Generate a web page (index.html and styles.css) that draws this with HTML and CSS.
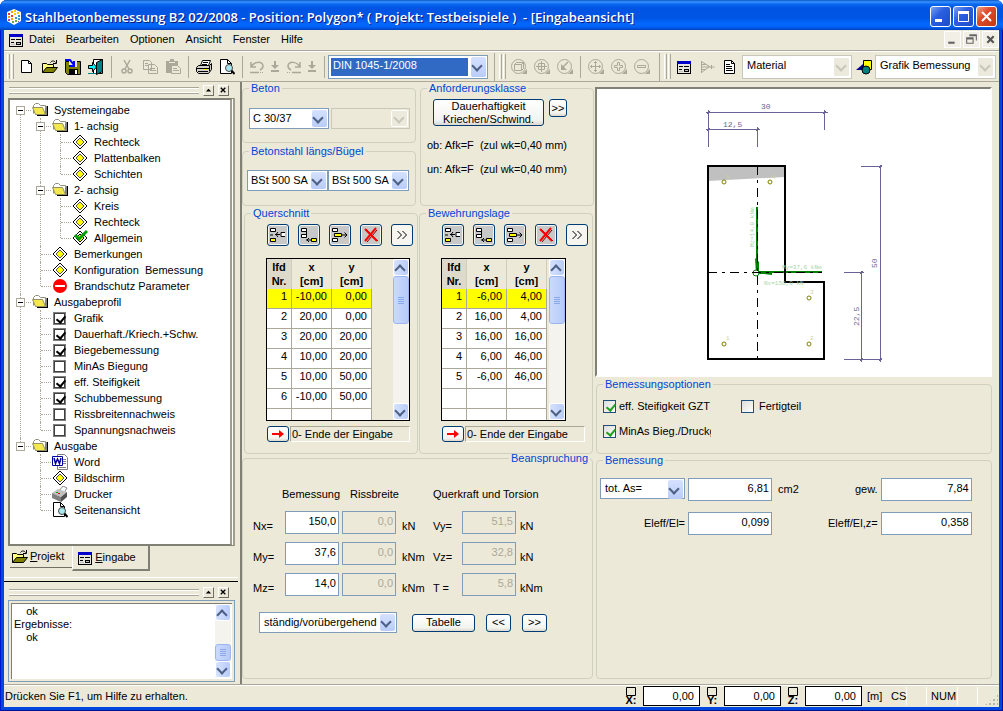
FILE: index.html
```html
<!DOCTYPE html>
<html lang="de">
<head>
  <meta charset="UTF-8">
  <meta name="viewport" content="width=device-width, initial-scale=1.0">
  <title>Stahlbetonbemessung B2</title>
  <link rel="stylesheet" href="styles.css">
</head>
<body>

  <!-- icon set -->
  <svg class="defs" width="0" height="0" aria-hidden="true">
    <symbol id="i-logo" viewBox="0 0 16 16">
      <path fill="#fff" d="M8 0l7 3v9l-7 4-7-4V3z"/>
      <path fill="#e33" d="M2 4h2v2H2zM5 6h2v2H5z"/><path fill="#f90" d="M5 2h2v2H5zM2 7h2v2H2zM5 9h2v2H5z"/>
      <path fill="#fc0" d="M8 1h2v2H8zM8 4h2v2H8zM11 3h2v2h-2z"/><path fill="#39c" d="M9 8h2v2H9zM12 6h2v2h-2zM12 9h2v2h-2z"/>
      <path fill="#6a4" d="M9 11h2v2H9zM6 12h2v2H6z"/><path fill="#a4a" d="M2 10h2v2H2zM12 12h1v1h-1z"/>
    </symbol>
    <symbol id="i-form" viewBox="0 0 16 16">
      <path fill="#000" d="M1 2h14v13H1z"/><path fill="#e8e6da" d="M2 5h12v9H2z"/><path fill="#0000c8" d="M1 2h14v3H1z"/>
      <path fill="#000" d="M3 7h4v1H3zM3 10h3v1H3zM8 7h5v1H8zM8 10h5v3H8z"/><path fill="#c0c0c0" d="M9 11h3v1H9zM3 12h4v1H3z"/>
    </symbol>
    <symbol id="i-new" viewBox="0 0 16 16">
      <path fill="#fff" stroke="#000" d="M2.500 1.500h7l3 3v9h-10z"/><path fill="none" stroke="#000" d="M9.500 1.500v3h3"/>
    </symbol>
    <symbol id="i-doc" viewBox="0 0 16 16">
      <path fill="#fff" stroke="#000" d="M2.500 1.500h7l3 3v10h-10z"/><path fill="none" stroke="#000" d="M9.500 1.500v3h3M4 5.500h4M4 7.500h6M4 9.500h6M4 11.500h7"/>
    </symbol>
    <symbol id="i-open" viewBox="0 0 16 16">
      <path fill="#ffff80" stroke="#000" d="M.5 13.500v-9h4l1 1h6v3"/><path fill="#808000" stroke="#000" d="M.5 13.500l4-5h11l-4 5z"/>
      <path fill="none" stroke="#000" d="M8.500 3.500c1-2 4-2 5 0M14.500 1v3.500H11"/>
    </symbol>
    <symbol id="i-save" viewBox="0 0 16 16">
      <path fill="#808000" stroke="#000" d="M.5 2.500h15v13h-13l-2-2z"/><path fill="#000" d="M4 10h9v6H4z"/><path fill="#fff" d="M10 11h2v4h-2z"/>
      <path fill="#e8e8e8" d="M4 2h8v6H4z"/><path fill="none" stroke="#00f" stroke-width="2" d="M0 1h5l4 5M9 2v5H4"/>
    </symbol>
    <symbol id="i-exit" viewBox="0 0 16 16">
      <path fill="#fff" stroke="#000" d="M5.500 .5h9v14h-9z"/><path fill="#008080" stroke="#000" d="M8.500 3.500l6-3v12l-6 3z"/>
      <path fill="#0ff" stroke="#000" d="M.5 6.500h4v-3l4 4.500-4 4.500v-3h-4z"/><path stroke="#008080" d="M0 14.500h8"/>
    </symbol>
    <symbol id="i-cut" viewBox="0 0 16 16">
      <path fill="none" stroke="#aca899" stroke-width="1.500" d="M5 1l5 9M11 1l-5 9"/><circle cx="5" cy="12" r="2" fill="none" stroke="#aca899" stroke-width="1.500"/><circle cx="11" cy="12" r="2" fill="none" stroke="#aca899" stroke-width="1.500"/>
    </symbol>
    <symbol id="i-copy" viewBox="0 0 16 16">
      <path fill="#ece9d8" stroke="#aca899" d="M1.500 1.500h6l2 2v7h-8zM6.500 5.500h6l3 3v6h-9z"/><path stroke="#aca899" d="M3 4.500h3M3 6.500h3M8 9.500h5M8 11.500h6"/>
    </symbol>
    <symbol id="i-paste" viewBox="0 0 16 16">
      <path fill="#aca899" d="M1 2h12v12H1z"/><path fill="#ece9d8" d="M4 3h6v1H4z"/><path fill="#aca899" d="M5 0h4v3H5z"/>
      <path fill="#ece9d8" stroke="#aca899" d="M6.500 6.500h6l3 3v5h-9z"/><path stroke="#aca899" d="M8 9.500h4M8 11.500h6"/>
    </symbol>
    <symbol id="i-print" viewBox="0 0 16 16">
      <path fill="#fff" stroke="#000" d="M4.500 6.500l2-5h8l-2 5z"/><path stroke="#000" d="M7 3.500h5M6 5.500h5"/>
      <path fill="#d4d0c8" stroke="#000" d="M.5 8.500l2-2h11l2-2v6l-3 4H2.500l-2-2z"/><path stroke="#000" d="M1 9.500h12M2 12.500h10M13.500 7v5"/><path stroke="#ff0" stroke-width="1" d="M8 10.500h3"/>
    </symbol>
    <symbol id="i-preview" viewBox="0 0 16 16">
      <path fill="#fff" stroke="#000" d="M1.500 .5h7l4 4v10h-11z"/><path fill="none" stroke="#000" d="M8.500 .5v4h4"/>
      <circle cx="10" cy="9" r="3.500" fill="#a8e8f0" stroke="#444"/><path stroke="#000" stroke-width="2" d="M12.500 11.500l3 3.500"/>
    </symbol>
    <symbol id="i-undo" viewBox="0 0 16 16">
      <path fill="none" stroke="#aca899" stroke-width="1.500" d="M2 3v5h5M2 8c3-6 12-6 12-1 0 2-1 3-3 4M1 13.500h9"/><path stroke="#aca899" stroke-dasharray="1 1" d="M11 13.500h4"/>
    </symbol>
    <symbol id="i-redo" viewBox="0 0 16 16">
      <path fill="none" stroke="#aca899" stroke-width="1.500" d="M14 3v5H9M14 8C11 2 2 2 2 7c0 2 1 3 3 4M6 13.500h9"/><path stroke="#aca899" stroke-dasharray="1 1" d="M1 13.500h4"/>
    </symbol>
    <symbol id="i-down" viewBox="0 0 16 16">
      <path fill="#aca899" d="M7 2h2v4h3L8 10 4 6h3zM4 11h8v2H4z"/>
    </symbol>
    <symbol id="i-zwin" viewBox="0 0 16 16">
      <circle cx="7.500" cy="7.500" r="7" fill="none" stroke="#aca899"/><path fill="none" stroke="#aca899" d="M3.500 5.500h7v6h-7zM3.500 5.500l2-2h7v6l-2 2M10.500 5.500l2-2"/><path fill="#aca899" d="M11 15h5v-5z"/>
    </symbol>
    <symbol id="i-zall" viewBox="0 0 16 16">
      <circle cx="7.500" cy="7.500" r="7" fill="none" stroke="#aca899"/><path fill="none" stroke="#aca899" d="M4.500 4.500h6v6h-6zM7.500 2v11M2 7.500h11"/><path fill="#aca899" d="M11 15h5v-5z"/>
    </symbol>
    <symbol id="i-zprev" viewBox="0 0 16 16">
      <circle cx="7.500" cy="7.500" r="7" fill="none" stroke="#aca899"/><path fill="none" stroke="#aca899" stroke-width="1.500" d="M11 3l-6 6"/><path fill="#aca899" d="M4 5v6h6zM11 15h5v-5z"/>
    </symbol>
    <symbol id="i-pan" viewBox="0 0 16 16">
      <circle cx="7.500" cy="7.500" r="7" fill="none" stroke="#aca899"/><path fill="none" stroke="#aca899" d="M7.500 2v11M2 7.500h11M6 3.500h3M6 11.500h3M3.500 6v3M11.500 6v3"/><path fill="#aca899" d="M11 15h5v-5z"/>
    </symbol>
    <symbol id="i-zin" viewBox="0 0 16 16">
      <circle cx="7.500" cy="7.500" r="7" fill="none" stroke="#aca899"/><path fill="none" stroke="#aca899" d="M6.500 3.500h2v3h3v2h-3v3h-2v-3h-3v-2h3z"/><path fill="#aca899" d="M11 15h5v-5z"/>
    </symbol>
    <symbol id="i-zout" viewBox="0 0 16 16">
      <circle cx="7.500" cy="7.500" r="7" fill="none" stroke="#aca899"/><path fill="none" stroke="#aca899" d="M3.500 6.500h8v2h-8z"/><path fill="#aca899" d="M11 15h5v-5z"/>
    </symbol>
    <symbol id="i-load" viewBox="0 0 16 16">
      <path fill="none" stroke="#aca899" d="M2.500 2v12M2.500 2.500l8 5-8 6M2.500 5.500h4M2.500 8h13M2.500 10.500h4M12.500 6v4"/>
    </symbol>
    <symbol id="i-shapes" viewBox="0 0 16 16">
      <path fill="#ff0" stroke="#000" d="M7.500 1.500h8v9h-8z"/><path fill="#000080" d="M0 11l7-6v6z"/><circle cx="10" cy="11" r="4" fill="#008080" stroke="#000"/>
    </symbol>
    <symbol id="i-folder" viewBox="0 0 16 16">
      <path fill="#000" d="M5 13h10V4h1v10H5z"/><path fill="#808080" d="M13 4h2v9h-2z"/>
      <path fill="#fff" stroke="#909080" d="M1.500 11.500v-8l2-2h3l2 2h5v2"/><path fill="#f4e84c" stroke="#909060" d="M3.500 12.500l-3-7h10l3 7z"/>
    </symbol>
    <symbol id="i-diamond" viewBox="0 0 16 16">
      <path fill="#fff" stroke="#000" d="M8 1l7 7-7 7-7-7z"/><path fill="#ff0" stroke="#555" d="M8 4l4 4-4 4-4-4z"/>
    </symbol>
    <symbol id="i-done" viewBox="0 0 16 16">
      <path fill="#fff" stroke="#000" d="M8 1l7 7-7 7-7-7z"/><path fill="#ff0" stroke="#000" d="M8 4l4 4-4 4-4-4z"/>
      <path fill="none" stroke="#00a000" stroke-width="3" d="M3 5l4 4 8-8"/>
    </symbol>
    <symbol id="i-stop" viewBox="0 0 16 16">
      <circle cx="8" cy="8" r="7" fill="#f00"/><path fill="#fff" d="M3 7h10v2H3z"/>
    </symbol>
    <symbol id="i-word" viewBox="0 0 16 16">
      <path fill="#fff" stroke="#808080" d="M5.500 .5h7l3 3v12h-10z"/><path stroke="#808080" d="M11 5.500h3M11 7.500h3M11 9.500h3M7 13.500h7"/>
      <path fill="#fff" stroke="#0000a0" d="M.5 2.500h10v9H.5z"/><path fill="none" stroke="#0000a0" stroke-width="1.500" d="M2 4l1.500 5.500L5.500 5l2 4.500L9 4"/>
    </symbol>
    <symbol id="i-printer" viewBox="0 0 16 16">
      <path fill="#fff" stroke="#888" d="M7 5l4-5 4 2-3 5z"/><path fill="#c0c0c0" d="M0 7l6-4 9 3-6 5z"/><path fill="#808080" d="M0 7l9 4v5l-9-4z"/><path fill="#505050" d="M9 11l6-5v5l-6 5z"/>
      <path fill="#e00" d="M6 7h2v1H6z"/><path fill="#0a0" d="M4 6h2v1H4z"/>
    </symbol>
    <symbol id="i-insa" viewBox="0 0 16 16">
      <path fill="#fff" stroke="#000" d="M.5 1.500h5v3h-5zM15 5.500h-4v4h4"/><path fill="#ff0" stroke="#000" d="M.5 11.500h5v3h-5z"/><path stroke="#000" fill="none" d="M0 8h3M5 7.500h5M8 5L6 7.500 8 10"/>
    </symbol>
    <symbol id="i-insb" viewBox="0 0 16 16">
      <path fill="#fff" stroke="#000" d="M.5 1.500h5v3h-5zM.5 7.500h5v3h-5zM5.500 4v4"/><path fill="#ff0" stroke="#000" d="M10.500 11.500h5v3h-5z"/><path stroke="#000" fill="none" d="M5 13h5M8 11l-2 2 2 2"/>
    </symbol>
    <symbol id="i-move" viewBox="0 0 16 16">
      <path fill="#fff" stroke="#000" d="M.5 1.500h5v3h-5zM.5 11.500h5v3h-5z"/><path fill="#ff0" stroke="#000" d="M2.500 6.500h7v3h-7z"/><path stroke="#000" fill="none" d="M10 8h5M12.500 5.500L15 8l-2.500 2.500"/>
    </symbol>
    <symbol id="i-del" viewBox="0 0 16 16">
      <path fill="none" stroke="#700" stroke-width="1" d="M3 2l12 12M14 3L4 15"/><path fill="none" stroke="#f00" stroke-width="2" d="M2 2l12 12M13 1L2 14"/>
    </symbol>
    <symbol id="i-more" viewBox="0 0 16 16">
      <path fill="none" stroke="#000" d="M3.500 4l4 4-4 4M8.500 4l4 4-4 4"/>
    </symbol>
    <symbol id="i-arrow" viewBox="0 0 16 10">
      <path fill="#f00" d="M2 4h7V1l5 4-5 4V6H2z"/>
    </symbol>
    <symbol id="i-pin" viewBox="0 0 10 9">
      <path fill="none" stroke="#000" d="M.5 .5h9v8h-9z"/>
    </symbol>
  </svg>

  <div class="window">
    <header class="titlebar">
      <svg class="icon"><use href="#i-logo"/></svg>
      <h1>Stahlbetonbemessung B2 02/2008 - Position: Polygon* ( Projekt: Testbeispiele )  - [Eingabeansicht]</h1>
      <button class="cap" aria-label="Minimieren"><svg viewBox="0 0 19 19"><path fill="#fff" d="M4 12h7v3H4z"/></svg></button>
      <button class="cap" aria-label="Maximieren"><svg viewBox="0 0 19 19"><path fill="none" stroke="#fff" d="M4.500 4.500h10v10h-10z"/><path fill="#fff" d="M4 4h11v3H4z"/></svg></button>
      <button class="cap cap-close" aria-label="Schließen"><svg viewBox="0 0 19 19"><path stroke="#fff" stroke-width="2" d="M5 5l9 9M14 5l-9 9"/></svg></button>
    </header>

    <nav class="menubar">
      <svg class="icon"><use href="#i-form"/></svg>
      <a href="#">Datei</a>
      <a href="#">Bearbeiten</a>
      <a href="#">Optionen</a>
      <a href="#">Ansicht</a>
      <a href="#">Fenster</a>
      <a href="#">Hilfe</a>
      <div class="mdi">
        <button aria-label="Minimieren"><svg viewBox="0 0 14 14"><path fill="#666" d="M3 9h6v2H3z"/></svg></button>
        <button aria-label="Wiederherstellen"><svg viewBox="0 0 14 14"><path fill="none" stroke="#666" d="M2.500 6.500h6v4h-6zM5 3.500h6.500V8M2 5.500h7M5 2.500h7"/></svg></button>
        <button aria-label="Schließen"><svg viewBox="0 0 14 14"><path stroke="#555" stroke-width="2" d="M4 4l6 6M10 4l-6 6"/></svg></button>
      </div>
    </nav>

    <div class="toolbar">
      <span class="grip"></span>
      <button class="tool" aria-label="Neu"><svg class="icon"><use href="#i-new"/></svg></button>
      <button class="tool" aria-label="Öffnen"><svg class="icon"><use href="#i-open"/></svg></button>
      <button class="tool" aria-label="Speichern"><svg class="icon"><use href="#i-save"/></svg></button>
      <button class="tool" aria-label="Beenden"><svg class="icon"><use href="#i-exit"/></svg></button>
      <span class="sep"></span>
      <button class="tool" aria-label="Ausschneiden" disabled><svg class="icon"><use href="#i-cut"/></svg></button>
      <button class="tool" aria-label="Kopieren" disabled><svg class="icon"><use href="#i-copy"/></svg></button>
      <button class="tool" aria-label="Einfügen" disabled><svg class="icon"><use href="#i-paste"/></svg></button>
      <span class="sep"></span>
      <button class="tool" aria-label="Drucken"><svg class="icon"><use href="#i-print"/></svg></button>
      <button class="tool" aria-label="Seitenansicht"><svg class="icon"><use href="#i-preview"/></svg></button>
      <span class="sep"></span>
      <button class="tool tool-m" aria-label="Rückgängig" disabled><svg class="icon"><use href="#i-undo"/></svg></button>
      <button class="tool tool-s" aria-label="Rückgängig Liste" disabled><svg class="icon"><use href="#i-down"/></svg></button>
      <button class="tool tool-m" aria-label="Wiederholen" disabled><svg class="icon"><use href="#i-redo"/></svg></button>
      <button class="tool tool-s" aria-label="Wiederholen Liste" disabled><svg class="icon"><use href="#i-down"/></svg></button>
      <span class="sep"></span>
      <span class="combo combo-norm"><select aria-label="Norm"><option>DIN 1045-1/2008</option></select></span>
      <span class="sep sep-end"></span>
      <span class="grip"></span>
      <button class="tool" aria-label="Zoom Fenster" disabled><svg class="icon"><use href="#i-zwin"/></svg></button>
      <button class="tool" aria-label="Zoom alles" disabled><svg class="icon"><use href="#i-zall"/></svg></button>
      <button class="tool" aria-label="Zoom zurück" disabled><svg class="icon"><use href="#i-zprev"/></svg></button>
      <span class="sep"></span>
      <button class="tool" aria-label="Verschieben" disabled><svg class="icon"><use href="#i-pan"/></svg></button>
      <button class="tool" aria-label="Vergrößern" disabled><svg class="icon"><use href="#i-zin"/></svg></button>
      <button class="tool" aria-label="Verkleinern" disabled><svg class="icon"><use href="#i-zout"/></svg></button>
      <span class="sep sep-end"></span>
      <span class="grip"></span>
      <button class="tool" aria-label="Eingabe"><svg class="icon"><use href="#i-form"/></svg></button>
      <button class="tool" aria-label="Last" disabled><svg class="icon"><use href="#i-load"/></svg></button>
      <button class="tool" aria-label="Ausgabe"><svg class="icon"><use href="#i-doc"/></svg></button>
      <span class="combo combo-flat combo-mat"><select aria-label="Material"><option>Material</option></select></span>
      <button class="tool" aria-label="Grafik"><svg class="icon"><use href="#i-shapes"/></svg></button>
      <span class="combo combo-flat combo-graf"><select aria-label="Grafik"><option>Grafik Bemessung</option></select></span>
    </div>

    <main class="main">
      <aside class="dock">
        <div class="dock-head">
          <span class="ridge"></span>
          <button class="mini" aria-label="Einklappen"><svg viewBox="0 0 10 10"><path d="M2 6l3-3 3 3z"/></svg></button>
          <button class="mini" aria-label="Schließen"><svg viewBox="0 0 10 10"><path stroke="#000" stroke-width="1.500" d="M2 2l5 5M7 2L2 7"/></svg></button>
        </div>

        <div class="tree-box">
          <ul class="tree">
            <li><div class="node"><i class="exp"></i><svg class="icon"><use href="#i-folder"/></svg>Systemeingabe</div>
              <ul>
                <li><div class="node"><i class="exp"></i><svg class="icon"><use href="#i-folder"/></svg>1- achsig</div>
                  <ul>
                    <li><div class="node"><svg class="icon"><use href="#i-diamond"/></svg>Rechteck</div></li>
                    <li><div class="node"><svg class="icon"><use href="#i-diamond"/></svg>Plattenbalken</div></li>
                    <li><div class="node"><svg class="icon"><use href="#i-diamond"/></svg>Schichten</div></li>
                  </ul>
                </li>
                <li><div class="node"><i class="exp"></i><svg class="icon"><use href="#i-folder"/></svg>2- achsig</div>
                  <ul>
                    <li><div class="node"><svg class="icon"><use href="#i-diamond"/></svg>Kreis</div></li>
                    <li><div class="node"><svg class="icon"><use href="#i-diamond"/></svg>Rechteck</div></li>
                    <li><div class="node"><svg class="icon"><use href="#i-done"/></svg>Allgemein</div></li>
                  </ul>
                </li>
                <li><div class="node"><svg class="icon"><use href="#i-diamond"/></svg>Bemerkungen</div></li>
                <li><div class="node"><svg class="icon"><use href="#i-diamond"/></svg>Konfiguration  Bemessung</div></li>
                <li><div class="node"><svg class="icon"><use href="#i-stop"/></svg>Brandschutz Parameter</div></li>
              </ul>
            </li>
            <li><div class="node"><i class="exp"></i><svg class="icon"><use href="#i-folder"/></svg>Ausgabeprofil</div>
              <ul>
                <li><label class="node"><input type="checkbox" checked>Grafik</label></li>
                <li><label class="node"><input type="checkbox" checked>Dauerhaft./Kriech.+Schw.</label></li>
                <li><label class="node"><input type="checkbox" checked>Biegebemessung</label></li>
                <li><label class="node"><input type="checkbox">MinAs Biegung</label></li>
                <li><label class="node"><input type="checkbox" checked>eff. Steifigkeit</label></li>
                <li><label class="node"><input type="checkbox" checked>Schubbemessung</label></li>
                <li><label class="node"><input type="checkbox">Rissbreitennachweis</label></li>
                <li><label class="node"><input type="checkbox">Spannungsnachweis</label></li>
              </ul>
            </li>
            <li><div class="node"><i class="exp"></i><svg class="icon"><use href="#i-folder"/></svg>Ausgabe</div>
              <ul>
                <li><div class="node"><svg class="icon"><use href="#i-word"/></svg>Word</div></li>
                <li><div class="node"><svg class="icon"><use href="#i-diamond"/></svg>Bildschirm</div></li>
                <li><div class="node"><svg class="icon"><use href="#i-printer"/></svg>Drucker</div></li>
                <li><div class="node"><svg class="icon"><use href="#i-preview"/></svg>Seitenansicht</div></li>
              </ul>
            </li>
          </ul>
        </div>

        <div class="tabs">
          <button class="tab"><svg class="icon"><use href="#i-open"/></svg><span><u>P</u>rojekt</span></button>
          <button class="tab tab-on"><svg class="icon"><use href="#i-form"/></svg><span><u>E</u>ingabe</span></button>
        </div>

        <div class="splitter"></div>

        <div class="dock-head">
          <span class="ridge"></span>
          <button class="mini" aria-label="Einklappen"><svg viewBox="0 0 10 10"><path d="M2 6l3-3 3 3z"/></svg></button>
          <button class="mini" aria-label="Schließen"><svg viewBox="0 0 10 10"><path stroke="#000" stroke-width="1.500" d="M2 2l5 5M7 2L2 7"/></svg></button>
        </div>
        <div class="log">
          <textarea aria-label="Meldungen" readonly>
    ok
Ergebnisse:
    ok</textarea>
          <div class="scroll scroll-low">
            <button class="up" aria-label="nach oben"></button><span class="thumb"></span><button class="down" aria-label="nach unten"></button>
          </div>
        </div>
      </aside>

      <section class="view">
        <div class="inputs">
          <div class="row row-top">
            <div class="stack">
              <fieldset>
                <legend>Beton</legend>
                <div class="pair pair-gap">
                  <span class="combo"><select aria-label="Beton"><option>C 30/37</option></select></span>
                  <span class="combo combo-off"><select aria-label="Betonzusatz" disabled><option></option></select></span>
                </div>
              </fieldset>
              <fieldset>
                <legend>Betonstahl längs/Bügel</legend>
                <div class="pair">
                  <span class="combo"><select aria-label="Stahl längs"><option>BSt 500 SA</option></select></span>
                  <span class="combo"><select aria-label="Stahl Bügel"><option>BSt 500 SA</option></select></span>
                </div>
              </fieldset>
            </div>
            <fieldset class="anf">
              <legend>Anforderungsklasse</legend>
              <div class="anf-btns">
                <button class="btn btn-tall">Dauerhaftigkeit<br>Kriechen/Schwind.</button>
                <button class="btn btn-sq">&gt;&gt;</button>
              </div>
              <p>ob: Afk=F  (zul wk=0,40 mm)</p>
              <p>un: Afk=F  (zul wk=0,40 mm)</p>
            </fieldset>
          </div>

          <div class="row row-mid">
            <fieldset>
              <legend>Querschnitt</legend>
              <div class="icon-btns">
                <button class="btn-i" aria-label="Zeile darüber"><svg class="icon"><use href="#i-insa"/></svg></button>
                <button class="btn-i" aria-label="Zeile darunter"><svg class="icon"><use href="#i-insb"/></svg></button>
                <button class="btn-i" aria-label="Zeile verschieben"><svg class="icon"><use href="#i-move"/></svg></button>
                <button class="btn-i" aria-label="Zeile löschen"><svg class="icon"><use href="#i-del"/></svg></button>
                <button class="btn-i btn-plain" aria-label="Mehr"><svg class="icon"><use href="#i-more"/></svg></button>
              </div>
              <div class="grid-box grid-wide">
                <table>
                  <thead><tr><th>lfd<br>Nr.</th><th>x<br>[cm]</th><th>y<br>[cm]</th></tr></thead>
                  <tbody>
                    <tr class="sel"><td>1</td><td>-10,00</td><td>0,00</td></tr>
                    <tr><td>2</td><td>20,00</td><td>0,00</td></tr>
                    <tr><td>3</td><td>20,00</td><td>20,00</td></tr>
                    <tr><td>4</td><td>10,00</td><td>20,00</td></tr>
                    <tr><td>5</td><td>10,00</td><td>50,00</td></tr>
                    <tr><td>6</td><td>-10,00</td><td>50,00</td></tr>
                    <tr><td></td><td></td><td></td></tr>
                  </tbody>
                </table>
                <div class="scroll">
                  <button class="up" aria-label="nach oben"></button><span class="thumb"></span><button class="down" aria-label="nach unten"></button>
                </div>
              </div>
              <div class="end-row">
                <button class="btn btn-arrow" aria-label="Weiter"><svg><use href="#i-arrow"/></svg></button>
                <output>0- Ende der Eingabe</output>
              </div>
            </fieldset>
            <fieldset>
              <legend>Bewehrungslage</legend>
              <div class="icon-btns">
                <button class="btn-i" aria-label="Zeile darüber"><svg class="icon"><use href="#i-insa"/></svg></button>
                <button class="btn-i" aria-label="Zeile darunter"><svg class="icon"><use href="#i-insb"/></svg></button>
                <button class="btn-i" aria-label="Zeile verschieben"><svg class="icon"><use href="#i-move"/></svg></button>
                <button class="btn-i" aria-label="Zeile löschen"><svg class="icon"><use href="#i-del"/></svg></button>
                <button class="btn-i btn-plain" aria-label="Mehr"><svg class="icon"><use href="#i-more"/></svg></button>
              </div>
              <div class="grid-box">
                <table>
                  <thead><tr><th>lfd<br>Nr.</th><th>x<br>[cm]</th><th>y<br>[cm]</th></tr></thead>
                  <tbody>
                    <tr class="sel"><td>1</td><td>-6,00</td><td>4,00</td></tr>
                    <tr><td>2</td><td>16,00</td><td>4,00</td></tr>
                    <tr><td>3</td><td>16,00</td><td>16,00</td></tr>
                    <tr><td>4</td><td>6,00</td><td>46,00</td></tr>
                    <tr><td>5</td><td>-6,00</td><td>46,00</td></tr>
                    <tr><td></td><td></td><td></td></tr>
                    <tr><td></td><td></td><td></td></tr>
                  </tbody>
                </table>
                <div class="scroll">
                  <button class="up" aria-label="nach oben"></button><span class="thumb"></span><button class="down" aria-label="nach unten"></button>
                </div>
              </div>
              <div class="end-row">
                <button class="btn btn-arrow" aria-label="Weiter"><svg><use href="#i-arrow"/></svg></button>
                <output>0- Ende der Eingabe</output>
              </div>
            </fieldset>
          </div>

          <fieldset class="forces">
            <legend>Beanspruchung</legend>
            <div class="forces-grid">
              <span class="head head-b">Bemessung</span>
              <span class="head">Rissbreite</span>
              <span class="head head-q">Querkraft und Torsion</span>

              <label for="nx">Nx=</label><input id="nx" value="150,0"><input aria-label="Nx Riss" value="0,0" disabled><span>kN</span>
              <label for="vy">Vy=</label><input id="vy" value="51,5" disabled><span>kN</span>

              <label for="my">My=</label><input id="my" value="37,6"><input aria-label="My Riss" value="0,0" disabled><span>kNm</span>
              <label for="vz">Vz=</label><input id="vz" value="32,8" disabled><span>kN</span>

              <label for="mz">Mz=</label><input id="mz" value="14,0"><input aria-label="Mz Riss" value="0,0" disabled><span>kNm</span>
              <label for="t">T =</label><input id="t" value="5,8" disabled><span>kNm</span>
            </div>
            <div class="forces-foot">
              <span class="combo"><select aria-label="Situation"><option>ständig/vorübergehend</option></select></span>
              <button class="btn btn-tab">Tabelle</button>
              <button class="btn btn-nav">&lt;&lt;</button>
              <button class="btn btn-nav">&gt;&gt;</button>
            </div>
          </fieldset>
        </div>

        <div class="results">
          <div class="canvas">
            <svg viewBox="597 89 393 286" font-family="Liberation Mono, monospace">
              <path fill="#c0c0c0" d="M708 166h77v11l-40 2-37 2z"/>
              <!-- dimension lines -->
              <g stroke="#6a6496" fill="none" shape-rendering="crispEdges">
                <path d="M706 112.500h122M708.500 110v37M824.500 110v20M706 129.500h54M757.500 127v20"/>
                <path d="M861 166.500h21M880.500 165v197M861.500 271v91M844 272.500h20M844 359.500h38"/>
                <path d="M707 114l3-3M823 114l3-3M707 131l3-3M756 131l3-3M879 168l3-3M879 361l3-3M860 361l3-3M860 274l3-3"/>
              </g>
              <g fill="#6a6496" font-size="8">
                <text x="761" y="109">30</text>
                <text x="723" y="127">12,5</text>
                <text transform="translate(877 268) rotate(-90)">50</text>
                <text transform="translate(859 326) rotate(-90)">22,5</text>
              </g>
              <!-- internal forces -->
              <path fill="none" stroke="#008000" stroke-width="2" d="M757 207v65h65"/>
              <path fill="#008000" d="M755 258l4 4v10h13v3l-8-1h-8z"/>
              <circle cx="756" cy="273" r="3" fill="#fff" stroke="#008000"/>
              <g stroke="#000" shape-rendering="crispEdges" stroke-dasharray="9 5 3 5">
                <path d="M757.500 166v193M708 272.500h114"/>
              </g>
              <path fill="none" stroke="#000" stroke-width="2" d="M708 166h77v116h39v77H708z"/>
              <g fill="#a8d4a8" font-size="6">
                <text x="782" y="269">My=37,6 kNm</text>
                <text x="764" y="285">Nx=150,0 kN</text>
                <text transform="translate(754 247) rotate(-90)">Mz=14,0 kNm</text>
              </g>
              <g fill="#fff" stroke="#808000">
                <circle cx="724" cy="182" r="2"/><circle cx="770" cy="182" r="2"/><circle cx="809" cy="298" r="2"/>
                <circle cx="809" cy="344" r="2"/><circle cx="724" cy="344" r="2"/>
              </g>
              <g fill="#d0d0a0" font-size="6">
                <text x="726" y="179">5</text><text x="772" y="179">4</text><text x="810" y="294">3</text><text x="810" y="340">2</text><text x="726" y="340">1</text>
              </g>
            </svg>
          </div>

          <fieldset class="options">
            <legend>Bemessungsoptionen</legend>
            <label><input type="checkbox" checked>eff. Steifigkeit GZT</label>
            <label><input type="checkbox">Fertigteil</label>
            <label class="cut"><input type="checkbox" checked><span>MinAs Bieg./Druckg</span></label>
          </fieldset>

          <fieldset class="design">
            <legend>Bemessung</legend>
            <div class="design-grid">
              <span class="combo"><select aria-label="Ergebnis"><option>tot. As=</option></select></span>
              <input aria-label="tot. As" value="6,81">
              <span class="unit">cm2</span>
              <label for="gew">gew.</label><input id="gew" value="7,84">
              <label for="ei">Eleff/El=</label><input id="ei" value="0,099">
              <span></span>
              <label for="eiz">Eleff/El,z=</label><input id="eiz" value="0,358">
            </div>
          </fieldset>
        </div>
      </section>
    </main>

    <footer class="status">
      <span class="hint">Drücken Sie F1, um Hilfe zu erhalten.</span>
      <label class="coord" for="cx"><svg><use href="#i-pin"/></svg>X:</label><input id="cx" value="0,00">
      <label class="coord" for="cy"><svg><use href="#i-pin"/></svg>Y:</label><input id="cy" value="0,00">
      <label class="coord" for="cz"><svg><use href="#i-pin"/></svg>Z:</label><input id="cz" value="0,00">
      <span class="cell cell-m">[m]</span>
      <span class="cell cell-cs">CS</span>
      <span class="cell cell-e"></span>
      <span class="cell cell-num">NUM</span>
      <span class="cell cell-e"></span>
      <span class="corner"></span>
    </footer>
  </div>

</body>
</html>
```
FILE: styles.css
```css
* {
  box-sizing: border-box;
}
body {
  margin: 0;
  background: #fff;
  font-family: "Liberation Sans", Arial, sans-serif;
  font-size: 11px;
  line-height: 13px;
  color: #000;
}
button, input, select, textarea {
  font: inherit;
  color: inherit;
  margin: 0;
  padding: 0;
  border-radius: 0;
}
a {
  color: inherit;
  text-decoration: none;
}
ul {
  list-style: none;
  margin: 0;
  padding: 0;
}
.defs {
  position: absolute;
}
.icon {
  width: 16px;
  height: 16px;
  flex: none;
  display: block;
}

/* window frame */
.window {
  display: flex;
  flex-direction: column;
  min-height: 100vh;
  padding: 0 4px 4px;
  background: #0046e0;
  border-radius: 7px 7px 0 0;
  box-shadow: inset 1px 0 #0019cf, inset -1px -1px #001090;
}
.titlebar {
  display: flex;
  align-items: center;
  height: 30px;
  margin: 0 -4px;
  padding: 3px 6px 0;
  gap: 2px;
  border-radius: 7px 7px 0 0;
  background: linear-gradient(#0958c8 0, #3a93ff 2px, #0a6af0 4px, #0054e3 8px, #0055e5 18px, #0268fe 24px, #0062f4 27px, #0040c0 30px);
}
.titlebar h1 {
  flex: 1;
  margin: 0 0 0 1px;
  font: 600 13px/16px "Open Sans", "Noto Sans", sans-serif;
  color: #fff;
  white-space: pre;
  text-shadow: 1px 1px #0a1883;
  overflow: hidden;
}
.cap {
  width: 21px;
  height: 21px;
  border: 1px solid #fff;
  border-radius: 3px;
  background: linear-gradient(135deg, #7ba2f0, #2a5fe0 40%, #1c4ccc);
}
.cap-close {
  background: linear-gradient(135deg, #f0a088, #e0492a 40%, #c03a12);
}
.cap svg {
  display: block;
  width: 19px;
  height: 19px;
}

.menubar {
  display: flex;
  align-items: center;
  height: 21px;
  padding: 0 0 1px 4px;
  gap: 11px;
  background: #ece9d8;
  border-bottom: 1px solid #aca899;
}
.menubar .icon {
  margin-right: -6px;
}
.mdi {
  display: flex;
  gap: 2px;
  margin-left: auto;
}
.mdi button {
  width: 17px;
  height: 17px;
  border: 1px solid #fff;
  background: #f2f0e6;
}
.mdi svg {
  display: block;
}

/* toolbar */
.toolbar {
  display: flex;
  align-items: center;
  height: 30px;
  padding-left: 3px;
  background: #ece9d8;
  border-top: 1px solid #fff;
}
.grip {
  width: 8px;
  height: 25px;
  background:
    linear-gradient(90deg, #fff 1px, #ece9d8 1px 2px, #aca899 2px) 0 0 / 3px 100% no-repeat,
    linear-gradient(90deg, #fff 1px, #ece9d8 1px 2px, #aca899 2px) 4px 0 / 3px 100% no-repeat;
}
.tool {
  display: flex;
  align-items: center;
  justify-content: center;
  width: 23px;
  height: 22px;
  border: 0;
  background: none;
}
.tool-m {
  width: 21px;
}
.tool-s {
  width: 16px;
}
.sep {
  width: 8px;
  height: 22px;
  background: linear-gradient(#aca899, #aca899) 4px 0 / 1px 100% no-repeat;
}
.sep-end {
  width: 11px;
  height: 28px;
  background-position: 6px 0;
}

/* drop-downs */
.combo {
  position: relative;
  display: block;
}
.combo select {
  appearance: none;
  display: block;
  width: 100%;
  height: 21px;
  padding: 0 18px 0 4px;
  border: 1px solid #7f9db9;
  background: #fff;
  white-space: nowrap;
  opacity: 1;
}
.combo::before {
  content: "";
  position: absolute;
  z-index: 1;
  top: 2px;
  right: 2px;
  bottom: 2px;
  width: 15px;
  border-radius: 2px;
  background: linear-gradient(#d5e1fe, #b9ccf8);
  pointer-events: none;
}
.combo::after,
.scroll .up::after,
.scroll .down::after {
  content: "";
  position: absolute;
  z-index: 1;
  top: 50%;
  right: 7px;
  width: 6px;
  height: 6px;
  margin-top: -5px;
  border: solid #4d6185;
  border-width: 0 2px 2px 0;
  transform: rotate(45deg);
  pointer-events: none;
}
.combo-norm select,
.combo-flat select {
  height: 24px;
  padding-bottom: 3px;
}
.combo-norm {
  width: 160px;
}
.combo-norm select {
  color: #fff;
  padding-left: 2px;
  padding-right: 0;
  background: #316ac5;
  border: 3px solid #fff;
  border-right-width: 20px;
  outline: 1px solid #7f9db9;
  outline-offset: -1px;
}
.combo-mat {
  width: 110px;
  margin-left: 1px;
}
.combo-graf {
  width: 121px;
}
.combo-flat select,
.combo-off select {
  border-color: #c9c7ba;
}
.combo-off select {
  background: #ece9d8;
}
.combo-flat::before,
.combo-off::before {
  background: #eceadd;
  border: 1px solid #fff;
}
.combo-flat::after,
.combo-off::after {
  border-color: #c9c7ba;
}

/* docks on the left */
.main {
  flex: 1;
  display: flex;
  background: #ece9d8;
  border-top: 1px solid #aca899;
}
.dock {
  display: flex;
  flex-direction: column;
  width: 236px;
  padding-left: 4px;
}
.dock-head {
  display: flex;
  align-items: center;
  gap: 4px;
  height: 16px;
  padding: 0 11px 0 1px;
}
.ridge {
  flex: 1;
  height: 7px;
  border: 1px solid #aca899;
  border-width: 1px 0;
  box-shadow: inset 0 1px #fff, inset 0 -1px #fff;
}
.mini {
  width: 11px;
  height: 11px;
  border: 1px solid #fff;
  border-right-color: #716f64;
  border-bottom-color: #716f64;
  background: #ece9d8;
}
.mini svg {
  display: block;
  width: 9px;
  height: 9px;
}
.tree-box {
  flex: 1;
  margin-right: 5px;
  padding: 2px 0 0;
  background: #fff;
  border: 2px solid #808075;
  border-right: 5px double #a09d8c;
}
.node {
  display: flex;
  align-items: center;
  gap: 6px;
  height: 16px;
  padding-left: 20px;
  white-space: pre;
}
.tree {
  padding-left: 2px;
}
.tree ul {
  margin-left: 20px;
}
.tree li {
  position: relative;
}
.tree li::before {
  content: "";
  position: absolute;
  left: 8px;
  top: 0;
  bottom: 0;
  border-left: 1px dotted #aca899;
}
.tree > li:first-child::before {
  top: 8px;
}
.tree li:last-child::before {
  bottom: auto;
  height: 8px;
}
.tree li::after {
  content: "";
  position: absolute;
  left: 9px;
  top: 8px;
  width: 10px;
  border-top: 1px dotted #aca899;
}
.exp {
  position: absolute;
  z-index: 1;
  left: 4px;
  top: 4px;
  width: 9px;
  height: 9px;
  border: 1px solid #aca899;
  background: linear-gradient(#000, #000) 1px 3px / 5px 1px no-repeat #fff;
}
.node input {
  appearance: none;
  position: relative;
  flex: none;
  width: 13px;
  height: 13px;
  margin: 0 2px 0 1px;
  border: 1px solid #808080;
  background: #fff;
  box-shadow: inset 0 0 0 1px #404040;
}
.node input:checked::after,
.options input:checked::after {
  content: "";
  position: absolute;
  left: 4px;
  top: 1px;
  width: 4px;
  height: 7px;
  border: solid #000;
  border-width: 0 2px 2px 0;
  transform: rotate(40deg);
}

.tabs {
  display: flex;
  align-items: flex-start;
  height: 31px;
  padding-left: 2px;
}
.tab {
  display: flex;
  align-items: center;
  gap: 2px;
  height: 22px;
  padding: 0 8px 0 2px;
  border: 0;
  border-bottom: 1px solid #716f64;
  background: #ece9d8;
}
.tab-on {
  height: 25px;
  padding: 0 12px 0 4px;
  border-left: 1px solid #fff;
  border-right: 2px solid #808075;
  border-bottom: 2px solid #808075;
}
.splitter {
  height: 5px;
  margin: 0 2px 2px -4px;
  border-top: 1px solid #fff;
  border-bottom: 1px solid #000;
}
.log {
  display: flex;
  height: 82px;
  margin: 0 5px 2px 0;
  padding: 3px;
  border: 1px solid #7f9db9;
  background: #fff;
  box-shadow: inset 0 0 0 2px #ece9d8, inset 3px 3px #808075;
}
.log textarea {
  flex: 1;
  min-width: 0;
  padding: 1px 2px;
  border: 0;
  background: none;
  resize: none;
  overflow: hidden;
}

/* scroll bars */
.scroll {
  display: flex;
  flex-direction: column;
  width: 16px;
  background: #f4f3ee;
}
.scroll button {
  position: relative;
  height: 17px;
  border: 1px solid #fff;
  border-radius: 3px;
  background: linear-gradient(90deg, #d5e1fe, #b9ccf8);
}
.scroll .up::after,
.scroll .down::after {
  right: 4px;
}
.scroll .up::after {
  margin-top: -2px;
  transform: rotate(-135deg);
}
.scroll .down {
  margin-top: auto;
}
.thumb {
  height: 48px;
  border: 1px solid #9db5ee;
  border-radius: 3px;
  background:
    repeating-linear-gradient(#8ba8e8 0 1px, transparent 1px 2px) center / 6px 7px no-repeat,
    linear-gradient(90deg, #cbdafd, #b6caf8);
}
.scroll-low .thumb {
  height: 17px;
  margin-top: auto;
}
.scroll-low .down {
  margin-top: 0;
}

/* form groups */
.view {
  flex: 1;
  display: flex;
  gap: 1px;
  min-width: 0;
  padding: 2px 7px 5px 0;
  border-left: 2px solid #808075;
}
.inputs {
  display: flex;
  flex-direction: column;
  width: 352px;
}
fieldset {
  min-width: 0;
  margin: 0;
  padding: 0;
  border: 1px solid #d0d0bf;
  border-radius: 4px;
}
legend {
  margin-left: 6px;
  padding: 0 2px;
  line-height: 8px;
  color: #0046d5;
}
.row {
  display: grid;
  grid-template-columns: 1fr 1fr;
}
.row-top {
  gap: 4px;
}
.row-mid {
  gap: 1px;
  margin-top: 3px;
  padding: 0 1px 0 2px;
}
.stack {
  display: grid;
  gap: 4px;
}
.pair {
  display: grid;
  grid-template-columns: 1fr 1fr;
  padding: 15px 6px 14px 4px;
}
.pair-gap {
  gap: 2px;
  padding: 16px 5px 13px 6px;
}
.pair select {
  padding-left: 3px;
}
.anf p {
  margin: 0 0 11px 6px;
  white-space: pre;
}
.anf-btns {
  display: flex;
  align-items: flex-start;
  gap: 5px;
  margin: 7px 0 13px 12px;
}

.btn {
  display: flex;
  align-items: center;
  justify-content: center;
  height: 18px;
  border: 1px solid #003c74;
  border-radius: 3px;
  background: linear-gradient(#fff, #f3f3ef 80%, #dcd8cc);
}
.btn-tall {
  width: 111px;
  height: 27px;
}
.btn-sq {
  width: 18px;
}
.btn-tab {
  width: 63px;
}
.btn-nav {
  width: 25px;
}
.btn-arrow {
  width: 22px;
  height: 16px;
}
.btn-arrow svg {
  width: 16px;
  height: 10px;
}
.icon-btns {
  display: flex;
  gap: 9px;
  margin: 7px 0 12px 22px;
}
.btn-i {
  display: flex;
  align-items: center;
  justify-content: center;
  width: 22px;
  height: 22px;
  border: 1px solid #003c74;
  border-radius: 3px;
  background: #c8c8c8;
  box-shadow: inset 0 0 0 1px #f4f4f0;
}
.btn-plain {
  background: #f6f5f0;
}

.grid-box {
  display: flex;
  justify-content: space-between;
  width: 125px;
  height: 163px;
  margin-left: 21px;
  border: 1px solid #000;
  overflow: hidden;
}
.grid-wide {
  width: 144px;
}
table {
  border-collapse: separate;
  border-spacing: 0;
  table-layout: fixed;
  width: 105px;
  height: 170px;
}
th, td {
  padding: 0;
  border-right: 1px solid #aca899;
}
th {
  width: 40px;
  height: 30px;
  line-height: 14px;
  border-right-color: #d0cdbc;
  background: #ece9d8;
}
th:first-child {
  width: 25px;
  background: #dddacb;
}
td {
  height: 20px;
  padding-right: 4px;
  border-bottom: 1px solid #aca899;
  background: #fff;
  line-height: 14px;
  text-align: right;
  vertical-align: top;
}
.sel td {
  background: #ff0;
}
.end-row {
  display: flex;
  gap: 1px;
  margin: 5px 7px 11px 22px;
}
.end-row output {
  flex: 1;
  height: 16px;
  padding: 1px;
  border: 1px solid #aca899;
  border-right-color: #fff;
  border-bottom-color: #fff;
}

.forces {
  flex: 1;
  margin-right: 1px;
}
.forces legend {
  margin-left: auto;
  margin-right: 2px;
}
.forces-grid {
  display: grid;
  grid-template-columns: 32px 57px 60px 31px 29px 58px 1fr;
  grid-auto-rows: 31px;
  padding: 18px 0 0 10px;
}
.forces-grid label,
.forces-grid span {
  padding-top: 9px;
}
.forces input,
.design input {
  width: 54px;
  height: 23px;
  padding: 0 2px 4px 0;
  border: 1px solid #7f9db9;
  background: #fff;
  text-align: right;
}
.forces input:disabled {
  background: #ece9d8;
  color: #aca899;
}
.forces .head-b {
  grid-column: 1 / 3;
  padding-left: 29px;
}
.forces .head {
  padding-top: 8px;
}
.forces .head:nth-child(2) {
  padding-left: 8px;
  grid-column: 3 / 5;
}
.forces .head-q {
  grid-column: 5 / 8;
}
.forces-foot {
  display: flex;
  align-items: center;
  gap: 11px;
  padding: 8px 0 0 16px;
}
.forces-foot .combo {
  width: 138px;
  margin-right: 4px;
}

/* drawing and results */
.results {
  flex: 1;
  display: flex;
  flex-direction: column;
  min-width: 0;
}
.canvas {
  margin: 3px 0;
  border: 2px solid #808075;
  border-right-color: #fff;
  border-bottom-color: #fff;
  background: #fff;
}
.canvas svg {
  display: block;
  width: 100%;
}
.options {
  display: grid;
  grid-template-columns: 138px 1fr;
  grid-auto-rows: 25px;
  align-items: center;
  margin-left: 1px;
  padding: 6px 0 9px 6px;
}
.options legend {
  margin-left: 0;
}
.options label {
  display: flex;
  align-items: center;
  gap: 3px;
}
.options label:nth-of-type(2) {
  gap: 5px;
}
.options .cut {
  width: 108px;
  white-space: nowrap;
}
.cut span {
  overflow: hidden;
}
.options input {
  appearance: none;
  position: relative;
  flex: none;
  width: 13px;
  height: 13px;
  border: 1px solid #1c5180;
  background: linear-gradient(135deg, #dcdcd7, #fff);
}
.options input:checked::after {
  border-color: #21a121;
}
.design {
  flex: 1;
  margin: 2px 0 0 1px;
}
.design-grid {
  display: grid;
  grid-template-columns: 85px 84px 50px 1fr 91px;
  column-gap: 3px;
  row-gap: 11px;
  padding: 14px 23px 0 3px;
}
.design-grid input {
  width: 100%;
}
.design-grid label {
  padding-top: 5px;
  text-align: right;
}
.design-grid .unit {
  padding: 5px 0 0 3px;
}

.status {
  display: flex;
  align-items: center;
  height: 23px;
  background: #ece9d8;
  border-top: 1px solid #aca899;
  box-shadow: inset 0 1px #fff;
}
.hint {
  flex: 1;
  padding-left: 1px;
}
.coord {
  display: flex;
  flex-direction: column;
  align-items: center;
  width: 18px;
  margin-left: 6px;
  padding-right: 6px;
  font-weight: bold;
  line-height: 9px;
}
.coord svg {
  flex: none;
  width: 10px;
  height: 9px;
}
.status input {
  width: 57px;
  height: 20px;
  padding-right: 5px;
  border: 1px solid #000;
  background: #fff;
  text-align: right;
}
.cell {
  height: 18px;
  line-height: 18px;
  border-right: 1px solid #fff;
}
.cell-m {
  border: 0;
  width: 29px;
  padding-left: 5px;
}
.cell-cs {
  width: 16px;
}
.cell-e {
  width: 20px;
}
.cell-num {
  width: 31px;
  padding-left: 4px;
}
.corner {
  width: 14px;
  height: 12px;
  margin: 8px 1px 0 6px;
  background: radial-gradient(#b8b4a2 1px, transparent 1px) 0 0 / 4px 4px;
  clip-path: polygon(100% 0, 100% 100%, 0 100%);
}
```
